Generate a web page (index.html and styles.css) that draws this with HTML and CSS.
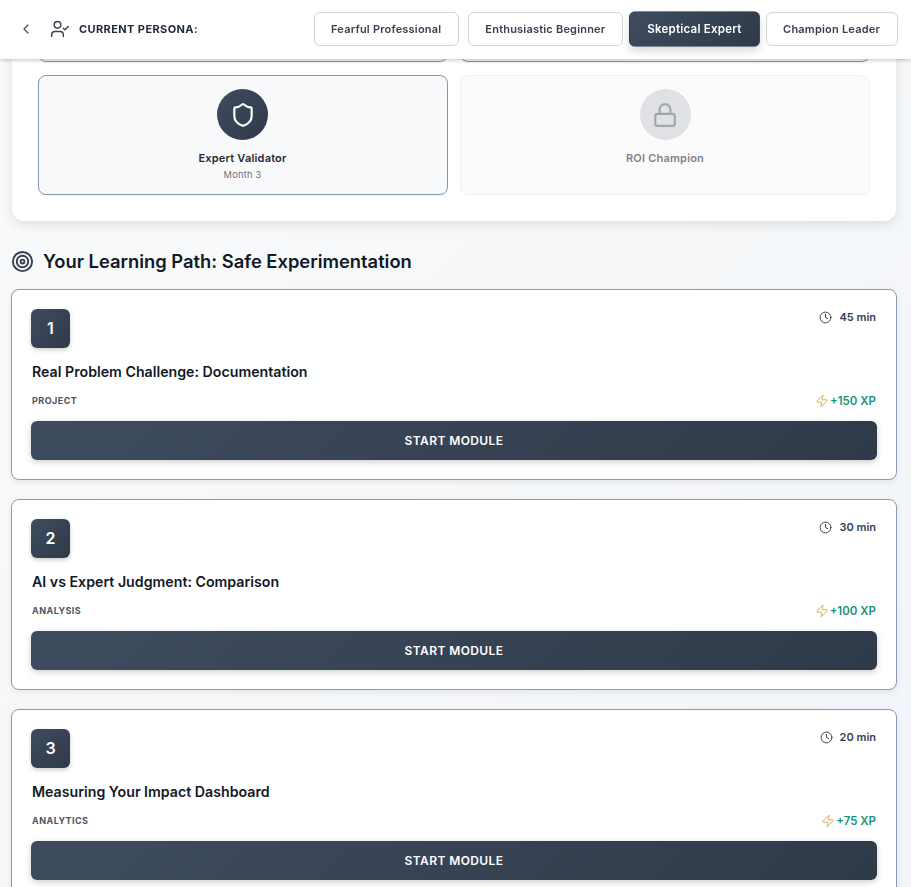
FILE: index.html
```html
<!DOCTYPE html>
<html lang="en">
<head>
  <meta charset="UTF-8">
  <meta name="viewport" content="width=device-width, initial-scale=1.0">
  <title>Learning Path</title>
  <link rel="stylesheet" href="styles.css">
</head>
<body>
  <header class="topbar">
    <button class="back" aria-label="Back">
      <svg width="16" height="16" viewBox="0 0 24 24"><path d="m15 18-6-6 6-6"/></svg>
    </button>
    <svg class="persona-icon" width="20" height="20" viewBox="0 0 24 24"><path d="M16 21v-2a4 4 0 0 0-4-4H6a4 4 0 0 0-4 4v2"/><circle cx="9" cy="7" r="4"/><path d="m16 11 2 2 4-4"/></svg>
    <span class="persona-label">CURRENT PERSONA:</span>
    <nav class="personas">
      <button class="persona">Fearful Professional</button>
      <button class="persona">Enthusiastic Beginner</button>
      <button class="persona active">Skeptical Expert</button>
      <button class="persona">Champion Leader</button>
    </nav>
  </header>

  <main class="page">
    <section class="panel">
      <div class="badges">
        <div class="badge earned"></div>
        <div class="badge earned"></div>
        <div class="badge earned">
          <div class="badge-icon">
            <svg width="26" height="26" viewBox="0 0 24 24"><path d="M20 13c0 5-3.5 7.5-7.66 8.95a1 1 0 0 1-.67-.01C7.5 20.5 4 18 4 13V6a1 1 0 0 1 1-1c2 0 4.5-1.2 6.24-2.72a1.17 1.17 0 0 1 1.52 0C14.51 3.81 17 5 19 5a1 1 0 0 1 1 1z"/></svg>
          </div>
          <div class="badge-name">Expert Validator</div>
          <div class="badge-when">Month 3</div>
        </div>
        <div class="badge locked">
          <div class="badge-icon">
            <svg width="26" height="26" viewBox="0 0 24 24"><rect x="3" y="11" width="18" height="11" rx="2" ry="2"/><path d="M7 11V7a5 5 0 0 1 10 0v4"/></svg>
          </div>
          <div class="badge-name">ROI Champion</div>
        </div>
      </div>
    </section>

    <h2 class="path-title">
      <svg width="23" height="23" viewBox="0 0 24 24"><circle cx="12" cy="12" r="10"/><circle cx="12" cy="12" r="6"/><circle cx="12" cy="12" r="2"/></svg>
      Your Learning Path: Safe Experimentation
    </h2>

    <article class="module">
      <div class="module-top">
        <div class="module-num">1</div>
        <div class="module-time"><svg width="14" height="14" viewBox="0 0 24 24"><circle cx="12" cy="12" r="10"/><path d="M12 6v6l4 2"/></svg>45 min</div>
      </div>
      <h3 class="module-title">Real Problem Challenge: Documentation</h3>
      <div class="module-meta">
        <span class="module-tag">PROJECT</span>
        <span class="module-xp"><svg width="14" height="14" viewBox="0 0 24 24"><path d="M4 14a1 1 0 0 1-.78-1.63l9.9-10.2a.5.5 0 0 1 .86.46l-1.92 6.02A1 1 0 0 0 13 10h7a1 1 0 0 1 .78 1.63l-9.9 10.2a.5.5 0 0 1-.86-.46l1.92-6.02A1 1 0 0 0 11 14z"/></svg>+150 XP</span>
      </div>
      <button class="module-start">START MODULE</button>
    </article>

    <article class="module">
      <div class="module-top">
        <div class="module-num">2</div>
        <div class="module-time"><svg width="14" height="14" viewBox="0 0 24 24"><circle cx="12" cy="12" r="10"/><path d="M12 6v6l4 2"/></svg>30 min</div>
      </div>
      <h3 class="module-title">AI vs Expert Judgment: Comparison</h3>
      <div class="module-meta">
        <span class="module-tag">ANALYSIS</span>
        <span class="module-xp"><svg width="14" height="14" viewBox="0 0 24 24"><path d="M4 14a1 1 0 0 1-.78-1.63l9.9-10.2a.5.5 0 0 1 .86.46l-1.92 6.02A1 1 0 0 0 13 10h7a1 1 0 0 1 .78 1.63l-9.9 10.2a.5.5 0 0 1-.86-.46l1.92-6.02A1 1 0 0 0 11 14z"/></svg>+100 XP</span>
      </div>
      <button class="module-start">START MODULE</button>
    </article>

    <article class="module">
      <div class="module-top">
        <div class="module-num">3</div>
        <div class="module-time"><svg width="14" height="14" viewBox="0 0 24 24"><circle cx="12" cy="12" r="10"/><path d="M12 6v6l4 2"/></svg>20 min</div>
      </div>
      <h3 class="module-title">Measuring Your Impact Dashboard</h3>
      <div class="module-meta">
        <span class="module-tag">ANALYTICS</span>
        <span class="module-xp"><svg width="14" height="14" viewBox="0 0 24 24"><path d="M4 14a1 1 0 0 1-.78-1.63l9.9-10.2a.5.5 0 0 1 .86.46l-1.92 6.02A1 1 0 0 0 13 10h7a1 1 0 0 1 .78 1.63l-9.9 10.2a.5.5 0 0 1-.86-.46l1.92-6.02A1 1 0 0 0 11 14z"/></svg>+75 XP</span>
      </div>
      <button class="module-start">START MODULE</button>
    </article>
  </main>
</body>
</html>
```

FILE: styles.css
```css
* {
  box-sizing: border-box;
}
html, body {
  height: 100%;
  overflow: hidden;
}
body {
  margin: 0;
  font-family: Inter, "Liberation Sans", sans-serif;
  color: #111827;
  background: linear-gradient(135deg, #fafafa 0%, #f1f5f9 100%);
}
svg {
  fill: none;
  stroke: currentColor;
  stroke-width: 2;
  stroke-linecap: round;
  stroke-linejoin: round;
  flex: none;
}
button {
  font-family: inherit;
  cursor: pointer;
}

/* top bar stays over the scrolled page */
.topbar {
  position: fixed;
  top: 0;
  left: 0;
  right: 0;
  z-index: 10;
  height: 59px;
  padding: 0 13.5px 1px 18px;
  display: flex;
  align-items: center;
  background: #fff;
  box-shadow: 0 1px 4px rgba(0,0,0,0.25);
}
.back {
  width: 16px;
  height: 16px;
  padding: 0;
  border: none;
  background: none;
  color: #4b5563;
  display: flex;
}
.persona-icon {
  margin-left: 16px;
  color: #374151;
  stroke-width: 1.7;
}
.persona-label {
  margin-left: 9px;
  font-size: 11px;
  font-weight: 700;
  letter-spacing: 0.4px;
  color: #1f2937;
}
.personas {
  margin-left: auto;
  display: flex;
  gap: 9px;
}
.persona {
  height: 34px;
  padding: 0 16.5px;
  font-size: 11px;
  font-weight: 600;
  letter-spacing: 0.2px;
  color: #374151;
  background: #fff;
  border: 1px solid #d1d5db;
  border-radius: 6px;
}
.persona.active {
  color: #fff;
  border-color: transparent;
  background: linear-gradient(135deg, #3f4c5f 0%, #2f3a49 100%);
  box-shadow: 0 4px 8px rgba(0,0,0,0.15);
  transform: scale(1.05);
}

/* page is scrolled down by this much in the shot */
.page {
  margin-top: -84px;
  padding: 0 15px 0 12px;
}
.panel {
  padding: 26px;
  background: #fff;
  border-radius: 12px;
  box-shadow: 0 4px 12px rgba(0,0,0,0.1);
}
.badges {
  display: grid;
  grid-template-columns: 410px 410px;
  gap: 13px 12px;
}
.badge {
  height: 120px;
  padding-top: 13px;
  text-align: center;
  border-radius: 8px;
}
.badge.earned {
  padding-right: 1px;
  background: #f8f9fb;
  border: 1px solid #8496b0;
  box-shadow: 0 1px 2px rgba(0,0,0,0.06);
}
.badge.locked {
  background: #fbfbfc;
  border: 1px solid #f0f1f3;
  color: #80838b;
}
.badge-icon {
  width: 51px;
  height: 51px;
  margin: 0 auto 11px;
  border-radius: 50%;
  display: flex;
  align-items: center;
  justify-content: center;
}
.earned .badge-icon {
  color: #fff;
  background: linear-gradient(135deg, #3f4c5f 0%, #2f3a49 100%);
}
.locked .badge-icon {
  color: #a3a6ad;
  background: #e0e1e5;
}
.badge-name {
  font-size: 11px;
  font-weight: 600;
  line-height: 14px;
  letter-spacing: 0.2px;
}
.earned .badge-name {
  color: #1f2937;
}
.badge-when {
  margin-top: 3px;
  font-size: 9.3px;
  line-height: 13px;
  letter-spacing: 0.2px;
  color: #6b7280;
}

.path-title {
  margin: 28px 0 16px -1px;
  display: flex;
  align-items: center;
  gap: 9px;
  font-size: 18.35px;
  line-height: 24px;
  font-weight: 600;
  color: #111827;
}
.path-title svg {
  color: #374151;
}

.module {
  height: 191px;
  margin: 0 -1px 19px;
  padding: 19px;
  background: #fff;
  border: 1px solid #8d9bb0;
  border-radius: 8px;
  box-shadow: 0 2px 6px rgba(0,0,0,0.08);
}
.module-top {
  display: flex;
  justify-content: space-between;
  align-items: flex-start;
}
.module-num {
  width: 39px;
  height: 39px;
  padding-bottom: 1px;
  display: flex;
  align-items: center;
  justify-content: center;
  font-size: 16px;
  font-weight: 600;
  color: #fff;
  border-radius: 6px;
  background: linear-gradient(135deg, #3f4c5f 0%, #2f3a49 100%);
  box-shadow: 0 2px 4px rgba(0,0,0,0.2);
}
.module-time {
  padding-right: 1px;
  display: flex;
  align-items: center;
  gap: 7px;
  font-size: 11px;
  font-weight: 600;
  line-height: 16px;
  color: #374151;
}
.module-time svg {
  width: 13px;
  height: 13px;
  stroke-width: 1.8;
}
.module-title {
  margin: 14px 0 0;
  padding-left: 1px;
  font-size: 14.2px;
  line-height: 20px;
  font-weight: 600;
  color: #111827;
}
.module-meta {
  margin-top: 9px;
  padding: 0 1px;
  height: 18px;
  display: flex;
  justify-content: space-between;
  align-items: center;
}
.module-tag {
  font-size: 9px;
  font-weight: 700;
  letter-spacing: 0.45px;
  color: #4b5563;
}
.module-xp {
  padding-top: 1px;
  display: flex;
  align-items: center;
  gap: 1px;
  font-size: 11.5px;
  font-weight: 600;
  color: #17917b;
}
.module-xp svg {
  color: #eeaa33;
  stroke-width: 1.7;
}
.module-start {
  display: block;
  width: 100%;
  height: 39px;
  margin-top: 12px;
  border: none;
  border-radius: 6px;
  font-size: 12px;
  font-weight: 600;
  letter-spacing: 0.4px;
  color: #fff;
  background: linear-gradient(135deg, #3f4c5f 0%, #2f3a49 100%);
  box-shadow: 0 2px 6px rgba(0,0,0,0.2);
}
```
